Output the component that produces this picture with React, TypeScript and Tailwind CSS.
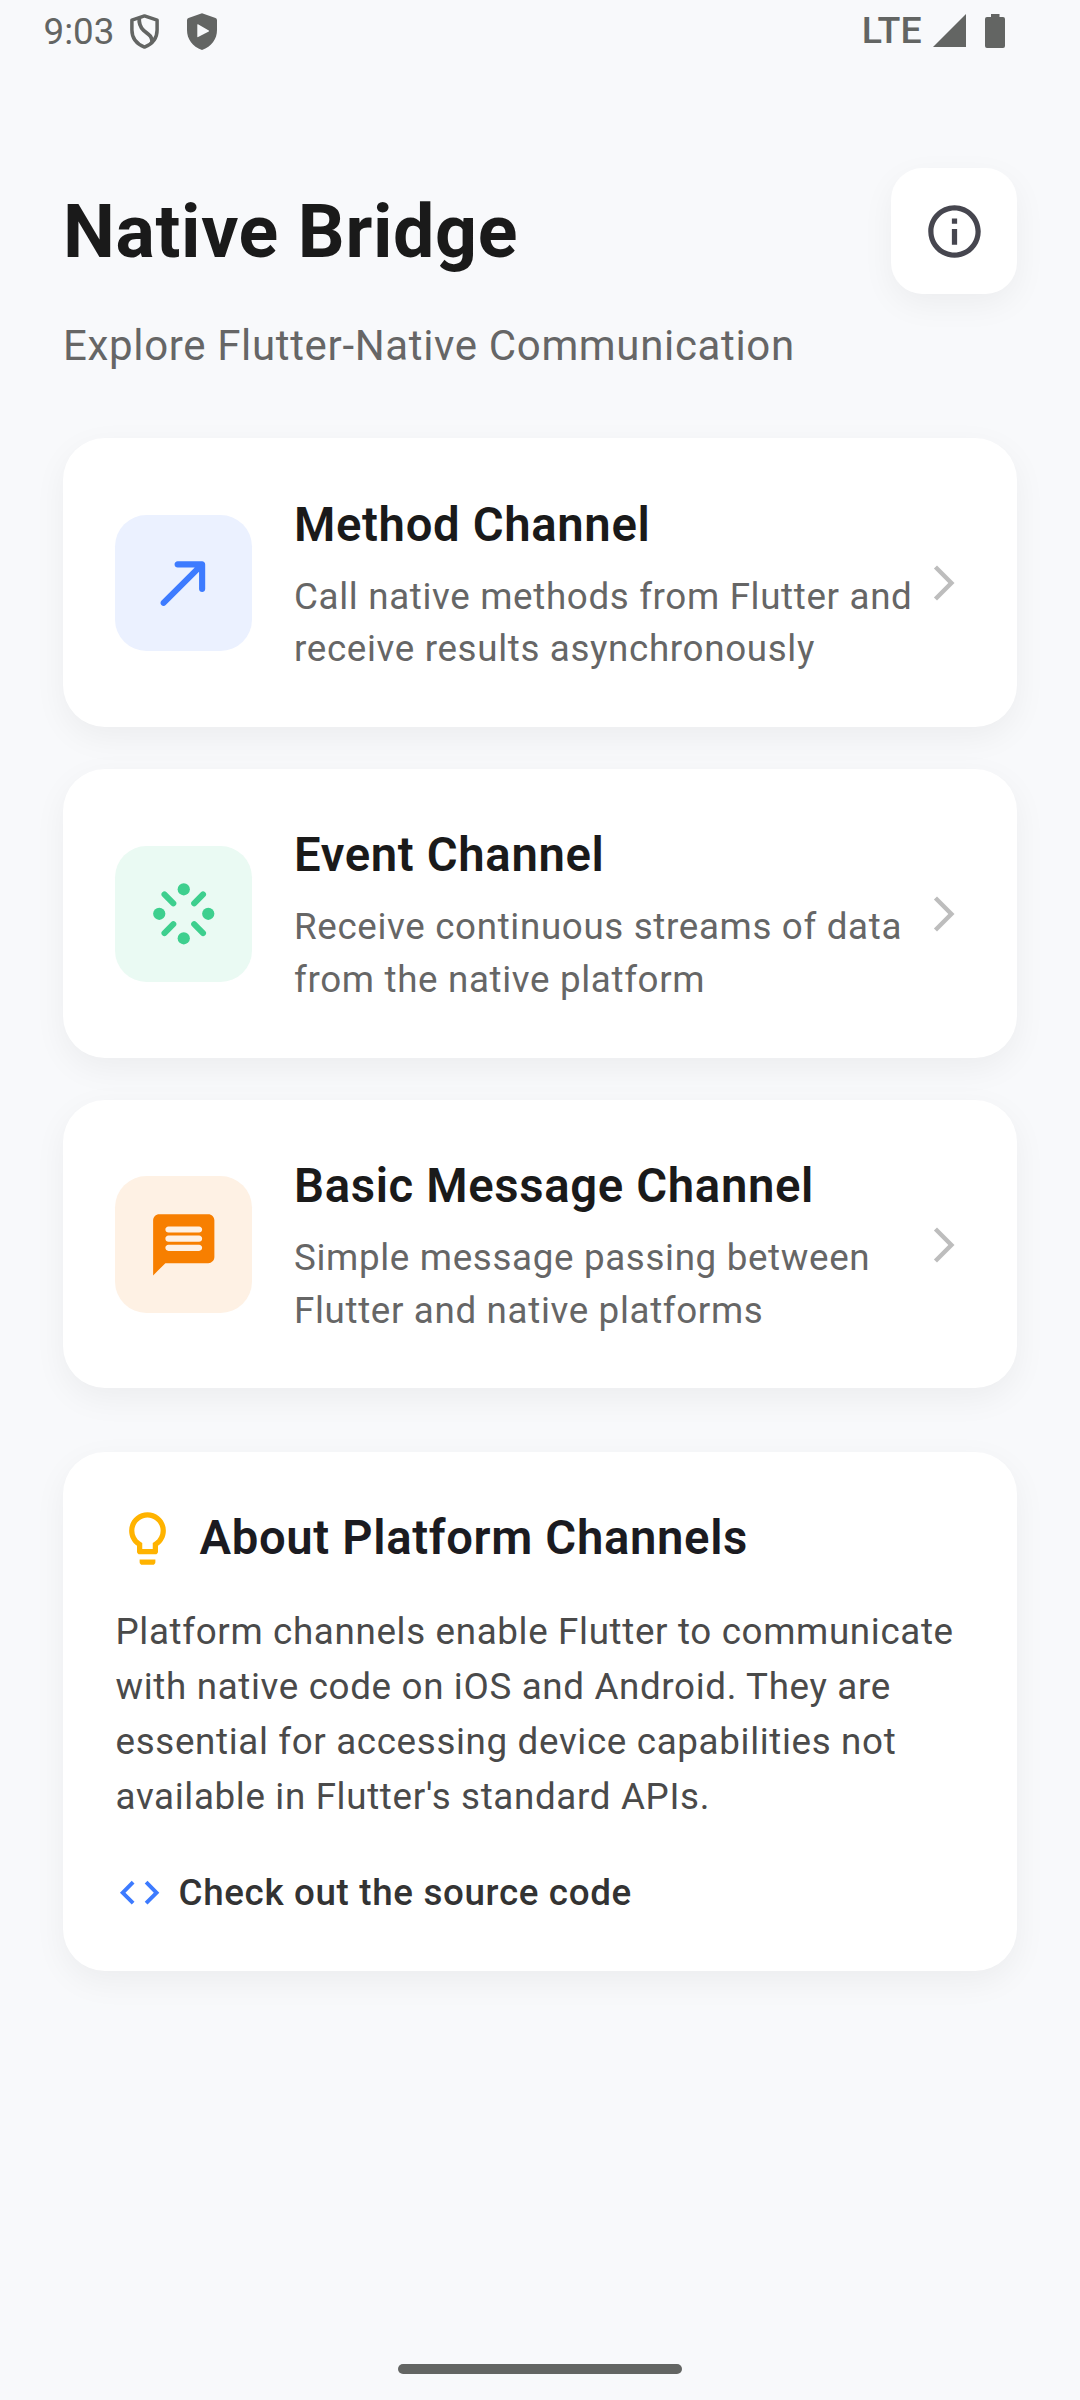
import type { ReactNode } from 'react';

const SHADOW = 'shadow-[0_10.5px_33px_rgba(0,0,0,0.05)]';

function StatusBar() {
  return (
    <header className="flex h-[63px] items-start justify-between pl-[43.5px] pr-[75px] text-[#636563]">
      <div className="flex items-start">
        <span className="mt-[10px] w-[86.5px] text-[36.75px] leading-[43px]">9:03</span>
        <svg className="mt-[14px] h-[35px] w-[29px]" viewBox="0 0 29 35" fill="none" stroke="currentColor">
          <path d="M14.5 1.9 27.1 6.2V16c0 8-5 14.100-12.600 17.100C6.900 30.100 1.900 24 1.900 16V6.200z" strokeWidth="3.500" strokeLinejoin="round" />
          <path d="M9.300 3.500c-.6 6.200.4 9.300 4.300 12.800 4 3.700 8.200 4.800 8.700 11.700" strokeWidth="3.800" />
        </svg>
        <svg className="ml-[28px] mt-[13px] h-[37px] w-[30px]" viewBox="0 0 30 37" fill="currentColor">
          <path fillRule="evenodd" d="M15 .3 28.500 5.100Q30 5.700 30 7.300V17c0 9-5.300 16.500-15 20C5.300 33.500 0 26 0 17V7.300Q0 5.700 1.500 5.100zM11 11.200Q10.300 10.900 10.300 11.800V23.600Q10.300 24.500 11.100 24.100L21.800 18.500Q22.600 18 21.800 17.500z" />
        </svg>
      </div>
      <div className="flex items-start">
        <span className="mt-[8px] text-[37.5px] font-medium leading-[44px] tracking-[0.2px]">LTE</span>
        <svg className="ml-[11px] mt-[14px] h-[33px] w-[33px]" viewBox="0 0 33 33" fill="currentColor">
          <path d="M33 0V33H0z" />
        </svg>
        <svg className="ml-[19px] mt-[14px] h-[34px] w-[20px]" viewBox="0 0 20 34" fill="currentColor">
          <path d="M6 0h8.500v3H18q2 0 2 2V32q0 2-2 2H2q-2 0-2-2V5q0-2 2-2H6z" />
        </svg>
      </div>
    </header>
  );
}

function ChannelCard({ title, lines, tint, icon }: { title: string; lines: string[]; tint: string; icon: ReactNode }) {
  return (
    <article className={`flex h-[288.75px] items-center rounded-[42px] bg-white pl-[52px] pr-[52.5px] pt-[1.5px] ${SHADOW}`}>
      <div className={`flex h-[136.5px] w-[137px] shrink-0 items-center justify-center rounded-[31.5px] ${tint}`}>{icon}</div>
      <div className="ml-[42px] flex-1">
        <h2 className="text-[47.25px] font-semibold leading-[68px] text-[#1a1a1a]">{title}</h2>
        <p className="mt-[12px] whitespace-nowrap text-[36.75px] leading-[52.5px] text-[#666666]">
          {lines[0]}
          <br />
          {lines[1]}
        </p>
      </div>
      <svg className="size-[42px] shrink-0" viewBox="0 0 24 24" fill="#bdbdbd">
        <path d="M6.23 20.23 8 22l10-10L8 2 6.23 3.77 14.46 12z" />
      </svg>
    </article>
  );
}

function ArrowIcon() {
  return (
    <svg className="size-[73.5px]" viewBox="0 0 24 24" fill="#3d7bff">
      <path d="M9 6c0 .56.45 1 1 1h5.590L4.700 17.890c-.39.39-.39 1.020 0 1.410.39.39 1.020.39 1.410 0L17 8.410V14c0 .55.45 1 1 1s1-.45 1-1V6c0-.55-.45-1-1-1h-8c-.56 0-1 .45-1 1z" />
    </svg>
  );
}

function StreamIcon() {
  return (
    <svg className="size-[73.5px]" viewBox="0 0 24 24" fill="#3ecf8e" stroke="#3ecf8e">
      <g stroke="none">
        <circle cx="12" cy="4" r="2" />
        <circle cx="20" cy="12" r="2" />
        <circle cx="12" cy="20" r="2" />
        <circle cx="4" cy="12" r="2" />
      </g>
      <path d="M5.700 5.650 8.600 8.600M18.300 5.650 15.400 8.600M5.700 18.300l2.900-2.900M18.300 18.300l-2.900-2.900" strokeWidth="1.950" strokeLinecap="round" />
    </svg>
  );
}

function MessageIcon() {
  return (
    <svg className="size-[73.5px]" viewBox="0 0 24 24" fill="#f77f00">
      <path d="M20 2H4c-1.100 0-2 .9-2 2v18l4-4h14c1.100 0 2-.9 2-2V4c0-1.100-.9-2-2-2zm-3 12H7c-.55 0-1-.45-1-1s.45-1 1-1h10c.55 0 1 .45 1 1s-.45 1-1 1zm0-3H7c-.55 0-1-.45-1-1s.45-1 1-1h10c.55 0 1 .45 1 1s-.45 1-1 1zm0-3H7c-.55 0-1-.45-1-1s.45-1 1-1h10c.55 0 1 .45 1 1s-.45 1-1 1z" />
    </svg>
  );
}

export default function App() {
  return (
    <div className="flex h-[2400px] w-[1080px] flex-col bg-[#f8f9fb] font-['Roboto',sans-serif]">
      <StatusBar />
      <main className="flex flex-1 flex-col px-[63px] pt-[105px] tracking-[0.656px]">
        <div className="flex h-[126px] items-center justify-between">
          <h1 className="pt-[2px] text-[73.5px] font-bold leading-[88px] text-[#1a1a1a]">Native Bridge</h1>
          <button className={`flex size-[126px] items-center justify-center rounded-[31.5px] bg-white ${SHADOW}`} aria-label="Info">
            <svg className="size-[63px]" viewBox="0 0 24 24" fill="#46464f">
              <path d="M11 7h2v2h-2zm0 4h2v6h-2zm1-9C6.480 2 2 6.480 2 12s4.480 10 10 10 10-4.480 10-10S17.520 2 12 2zm0 18c-4.410 0-8-3.590-8-8s3.590-8 8-8 8 3.590 8 8-3.590 8-8 8z" />
            </svg>
          </button>
        </div>
        <p className="mt-[22px] h-[60px] text-[42px] leading-[60px] text-[#666666]">Explore Flutter-Native Communication</p>

        <section className="mt-[62px] flex flex-col gap-[42px]">
          <ChannelCard title="Method Channel" lines={['Call native methods from Flutter and', 'receive results asynchronously']} tint="bg-[#ebf1ff]" icon={<ArrowIcon />} />
          <ChannelCard title="Event Channel" lines={['Receive continuous streams of data', 'from the native platform']} tint="bg-[#eafaf3]" icon={<StreamIcon />} />
          <ChannelCard title="Basic Message Channel" lines={['Simple message passing between', 'Flutter and native platforms']} tint="bg-[#fef1e4]" icon={<MessageIcon />} />
        </section>

        <section className={`mt-[63.75px] h-[519px] rounded-[42px] bg-white p-[52.5px] ${SHADOW}`}>
          <div className="flex h-[67.5px] items-center gap-[21px]">
            <svg className="size-[63px]" viewBox="0 0 24 24" fill="#ffb300">
              <path d="M9 21c0 .55.45 1 1 1h4c.55 0 1-.45 1-1v-1H9v1zm3-19C8.140 2 5 5.140 5 9c0 2.380 1.190 4.470 3 5.740V17c0 .55.45 1 1 1h6c.55 0 1-.45 1-1v-2.260c1.810-1.270 3-3.360 3-5.740 0-3.860-3.140-7-7-7zm2.850 11.100-.85.6V16h-4v-2.300l-.85-.6C7.800 12.160 7 10.630 7 9c0-2.760 2.240-5 5-5s5 2.240 5 5c0 1.630-.8 3.160-2.150 4.100z" />
            </svg>
            <h2 className="text-[47.25px] font-semibold leading-[67px] text-[#1b1b21]">About Platform Channels</h2>
          </div>
          <p className="mt-[31.5px] whitespace-nowrap text-[36.75px] leading-[55.125px] text-[#4a4a4a]">
            Platform channels enable Flutter to communicate
            <br />
            with native code on iOS and Android. They are
            <br />
            essential for accessing device capabilities not
            <br />
            available in Flutter's standard APIs.
          </p>
          <div className="mt-[42px] flex h-[52.5px] items-center gap-[15.75px]">
            <svg className="size-[47.25px]" viewBox="0 0 24 24" fill="#3d7bff">
              <path d="M9.400 16.600 4.800 12l4.600-4.600L8 6l-6 6 6 6 1.400-1.400zm5.200 0 4.600-4.600-4.600-4.600L16 6l6 6-6 6-1.400-1.400z" />
            </svg>
            <span className="pt-px text-[36.75px] font-medium leading-[53px] text-[#333333]">Check out the source code</span>
          </div>
        </section>
      </main>
      <footer className="flex h-[36px] justify-center">
        <div className="h-[10px] w-[284px] rounded-full bg-[#636563]" />
      </footer>
    </div>
  );
}
